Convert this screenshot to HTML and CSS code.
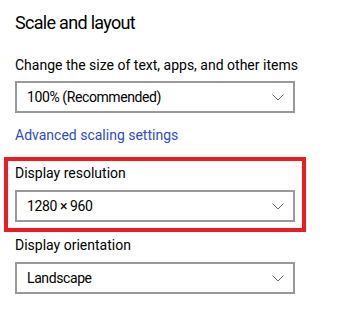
FILE: index.html
```html
<!DOCTYPE html>
<html>
<head>
<meta charset="utf-8">
<link rel="stylesheet" href="styles.css">
</head>
<body>
<div class="page">
  <h1 class="title">Scale and layout</h1>
  <div class="label first">Change the size of text, apps, and other items</div>
  <div class="select"><span>100% (Recommended)</span><svg class="chev" width="12" height="7" viewBox="0 0 12 7"><polyline points="0.5,0.5 6,6 11.5,0.5" fill="none" stroke="#6b6b6b" stroke-width="1"/></svg></div>
  <div class="link">Advanced scaling settings</div>
  <div class="highlight">
    <div class="label">Display resolution</div>
    <div class="select"><span>1280 × 960</span><svg class="chev" width="12" height="7" viewBox="0 0 12 7"><polyline points="0.5,0.5 6,6 11.5,0.5" fill="none" stroke="#6b6b6b" stroke-width="1"/></svg></div>
  </div>
  <div class="label after">Display orientation</div>
  <div class="select"><span>Landscape</span><svg class="chev" width="12" height="7" viewBox="0 0 12 7"><polyline points="0.5,0.5 6,6 11.5,0.5" fill="none" stroke="#6b6b6b" stroke-width="1"/></svg></div>
</div>
</body>
</html>
```
FILE: styles.css
```css
html, body {
  margin: 0;
  padding: 0;
  background: #ffffff;
}
body {
  font-family: Roboto, "Open Sans", sans-serif;
  color: #000000;
  width: 347px;
  height: 316px;
  overflow: hidden;
}
.page {
  padding: 9px 0 0 15px;
}
.title {
  margin: 0;
  font-size: 18px;
  font-weight: 400;
  letter-spacing: -0.7px;
  line-height: 28px;
}
.label {
  font-size: 14px;
  line-height: 20px;
}
.label.first {
  margin-top: 18px;
}
.label.after {
  margin-top: 3px;
}
.select {
  box-sizing: border-box;
  width: 280px;
  height: 32px;
  border: 2px solid #999999;
  margin-top: 6px;
  display: flex;
  align-items: center;
  justify-content: space-between;
  padding: 0 9px 0 10px;
  font-size: 14px;
  letter-spacing: -0.4px;
}
.chev {
  display: block;
}
.link {
  color: #2f4bc6;
  font-size: 14px;
  line-height: 20px;
  margin-top: 12px;
}
.highlight {
  box-sizing: border-box;
  width: 302px;
  margin: 12px 0 0 -11px;
  border: 4px solid #ec1c24;
  padding: 2px 0 6px 7px;
}
.highlight .select,
.label.after + .select {
  margin-top: 7px;
}
```
